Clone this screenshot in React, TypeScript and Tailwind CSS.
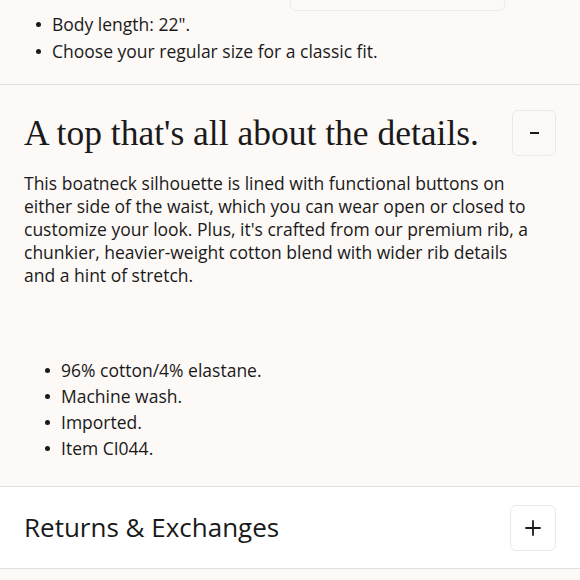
import { Plus } from 'lucide-react';

const sans = { fontFamily: '"Open Sans", "Lato", sans-serif' };

function Bullet({ children }: { children: React.ReactNode }) {
  return (
    <li className="flex items-center">
      <span className="mr-[11px] h-[5px] w-[5px] shrink-0 rounded-full bg-[#1a1a1a]" />
      <span>{children}</span>
    </li>
  );
}

export default function App() {
  return (
    <div className="h-[580px] w-[580px] overflow-hidden bg-[#fcf9f7] text-[#1a1a1a]" style={sans}>
      {/* Fit section (tail) */}
      <div className="relative h-[85px] border-b border-[#e2dfdd] pt-[14px]">
        <div className="absolute right-[75px] top-[-20px] h-[31px] w-[215px] rounded-b-[6px] border border-[#eeeae8]" />
        <ul className="space-y-[7px] pl-[36px] text-[17.5px] leading-[20px]">
          <Bullet>Body length: 22".</Bullet>
          <Bullet>Choose your regular size for a classic fit.</Bullet>
        </ul>
      </div>

      {/* Details section */}
      <div className="h-[402px] border-b border-[#e2dfdd] px-[24px] pt-[24px]">
        <div className="flex items-center justify-between">
          <h2 className="text-[35.5px] leading-[48px]" style={{ fontFamily: '"Liberation Serif", serif' }}>
            A top that's all about the details.
          </h2>
          <button className="flex h-[46px] w-[44px] items-center justify-center rounded-[6px] border border-[#ece8e6]">
            <span className="h-[2px] w-[9px] bg-[#1a1a1a]" />
          </button>
        </div>
        <p className="mt-[15px] max-w-[510px] text-[17.5px] leading-[23px]">
          This boatneck silhouette is lined with functional buttons on either side of the waist, which you can wear open
          or closed to customize your look. Plus, it's crafted from our premium rib, a chunkier, heavier-weight cotton
          blend with wider rib details and a hint of stretch.
        </p>
        <ul className="mt-[73px] space-y-[6px] pl-[21px] text-[17.5px] leading-[20px]">
          <Bullet>96% cotton/4% elastane.</Bullet>
          <Bullet>Machine wash.</Bullet>
          <Bullet>Imported.</Bullet>
          <Bullet>Item CI044.</Bullet>
        </ul>
      </div>

      {/* Returns */}
      <div className="flex h-[82px] items-center justify-between border-b border-[#e2dfdd] bg-white px-[24px]">
        <span className="text-[26px]">Returns &amp; Exchanges</span>
        <button className="flex h-[46px] w-[46px] items-center justify-center rounded-[6px] border border-[#ece8e6]">
          <Plus size={24} strokeWidth={1.8} />
        </button>
      </div>
    </div>
  );
}
